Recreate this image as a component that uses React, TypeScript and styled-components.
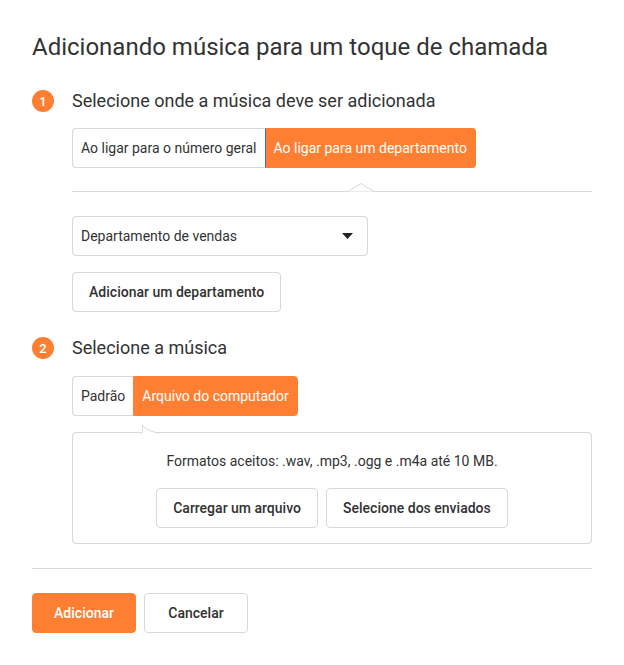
import React from "react";
import styled, { createGlobalStyle } from "styled-components";

const ORANGE = "#ff7f32";
const BORDER = "#d9d9d9";
const TEXT = "#333333";

const Global = createGlobalStyle`
  html, body { margin: 0; padding: 0; background: #fff; }
  body { font-family: Roboto, "Noto Sans", sans-serif; color: ${TEXT}; }
  * { box-sizing: border-box; }
`;

const Page = styled.div`
  padding: 31px 32px 32px 32px;
  width: 624px;
`;

const Title = styled.h1`
  margin: 0;
  font-size: 24px;
  line-height: 32px;
  font-weight: 400;
  color: ${TEXT};
`;

const StepRow = styled.div<{ $mt: number }>`
  display: flex;
  align-items: center;
  gap: 18px;
  margin-top: ${(p) => p.$mt}px;
  height: 24px;
`;

const StepBadge = styled.span`
  width: 22px;
  height: 22px;
  border-radius: 50%;
  background: ${ORANGE};
  color: #fff;
  font-size: 13px;
  font-weight: 500;
  display: flex;
  align-items: center;
  justify-content: center;
`;

const StepTitle = styled.h2`
  margin: 0;
  font-size: 18px;
  font-weight: 400;
  line-height: 24px;
  color: ${TEXT};
`;

const StepBody = styled.div`
  padding-left: 40px;
  display: flex;
  flex-direction: column;
  align-items: flex-start;
`;

const Segmented = styled.div<{ $mt: number }>`
  display: inline-flex;
  margin-top: ${(p) => p.$mt}px;
  height: 40px;
`;

const Segment = styled.button<{ $active?: boolean; $first?: boolean; $focus?: boolean }>`
  font-family: inherit;
  font-size: 14px;
  padding: 0 8px;
  height: 40px;
  cursor: pointer;
  border: 1px solid ${(p) => (p.$active ? ORANGE : BORDER)};
  background: ${(p) => (p.$active ? ORANGE : "#fff")};
  color: ${(p) => (p.$active ? "#fff" : TEXT)};
  border-radius: ${(p) => (p.$first ? "4px 0 0 4px" : "0 4px 4px 0")};
  ${(p) => (p.$first ? "border-right: none;" : "")}
  ${(p) => (p.$focus ? "border-left-color: #2f6fdc;" : "")}
`;

const CaretDivider = styled.div`
  position: relative;
  align-self: stretch;
  height: 1px;
  background: ${BORDER};
  margin-top: 23px;
`;

const CaretNotch = styled.svg`
  position: absolute;
  top: -8px;
  left: 276px;
`;

const Select = styled.div`
  margin-top: 24px;
  width: 296px;
  height: 40px;
  border: 1px solid ${BORDER};
  border-radius: 4px;
  display: flex;
  align-items: center;
  justify-content: space-between;
  padding: 0 14px 0 8px;
  font-size: 14px;
  color: ${TEXT};
`;

const Button = styled.button<{ $primary?: boolean; $mt?: number; $minWidth?: number }>`
  font-family: "Roboto Medium", Roboto, sans-serif;
  font-size: 14px;
  font-weight: 500;
  height: 40px;
  padding: 0 16px;
  border-radius: 4px;
  cursor: pointer;
  margin-top: ${(p) => p.$mt ?? 0}px;
  min-width: ${(p) => p.$minWidth ?? 0}px;
  border: 1px solid ${(p) => (p.$primary ? ORANGE : BORDER)};
  background: ${(p) => (p.$primary ? ORANGE : "#fff")};
  color: ${(p) => (p.$primary ? "#fff" : TEXT)};
`;

const UploadBox = styled.div`
  position: relative;
  align-self: stretch;
  margin-top: 16px;
  height: 112px;
  border: 1px solid ${BORDER};
  border-radius: 4px;
  display: flex;
  flex-direction: column;
  align-items: center;
  padding-top: 19px;
`;

const BoxTail = styled.svg`
  position: absolute;
  top: -8px;
  left: 69px;
`;

const Hint = styled.p`
  margin: 0;
  font-size: 14px;
  line-height: 18px;
  color: ${TEXT};
`;

const ButtonRow = styled.div<{ $mt: number }>`
  display: flex;
  gap: 8px;
  margin-top: ${(p) => p.$mt}px;
`;

const Divider = styled.hr`
  border: none;
  height: 1px;
  background: ${BORDER};
  margin: 24px 0 0 0;
`;

export default function App() {
  return (
    <Page>
      <Global />
      <Title>Adicionando música para um toque de chamada</Title>

      <StepRow $mt={26}>
        <StepBadge>1</StepBadge>
        <StepTitle>Selecione onde a música deve ser adicionada</StepTitle>
      </StepRow>
      <StepBody>
        <Segmented $mt={15}>
          <Segment $first>Ao ligar para o número geral</Segment>
          <Segment $active $focus>Ao ligar para um departamento</Segment>
        </Segmented>
        <CaretDivider>
          <CaretNotch width="26" height="9" viewBox="0 0 26 9">
            <path d="M0 8.5 L13 0.5 L26 8.5" fill="#fff" stroke={BORDER} strokeWidth="1" />
          </CaretNotch>
        </CaretDivider>
        <Select>
          <span>Departamento de vendas</span>
          <svg width="11" height="6" viewBox="0 0 11 6">
            <path d="M0 0 H11 L5.5 6 Z" fill="#222" />
          </svg>
        </Select>
        <Button $mt={16}>Adicionar um departamento</Button>
      </StepBody>

      <StepRow $mt={24}>
        <StepBadge>2</StepBadge>
        <StepTitle>Selecione a música</StepTitle>
      </StepRow>
      <StepBody>
        <Segmented $mt={16}>
          <Segment $first>Padrão</Segment>
          <Segment $active>Arquivo do computador</Segment>
        </Segmented>
        <UploadBox>
          <BoxTail width="18" height="9" viewBox="0 0 18 9">
            <path d="M0.5 9 V0.5 Q4 5 17 8.5 L17 9 Z" fill="#fff" />
            <path d="M0.5 8.5 V0.5 Q4 5 17 8.5" fill="none" stroke={BORDER} strokeWidth="1" />
          </BoxTail>
          <Hint>Formatos aceitos: .wav, .mp3, .ogg e .m4a até 10 MB.</Hint>
          <ButtonRow $mt={18}>
            <Button>Carregar um arquivo</Button>
            <Button>Selecione dos enviados</Button>
          </ButtonRow>
        </UploadBox>
      </StepBody>

      <Divider />
      <ButtonRow $mt={24}>
        <Button $primary $minWidth={104}>Adicionar</Button>
        <Button $minWidth={104}>Cancelar</Button>
      </ButtonRow>
    </Page>
  );
}
